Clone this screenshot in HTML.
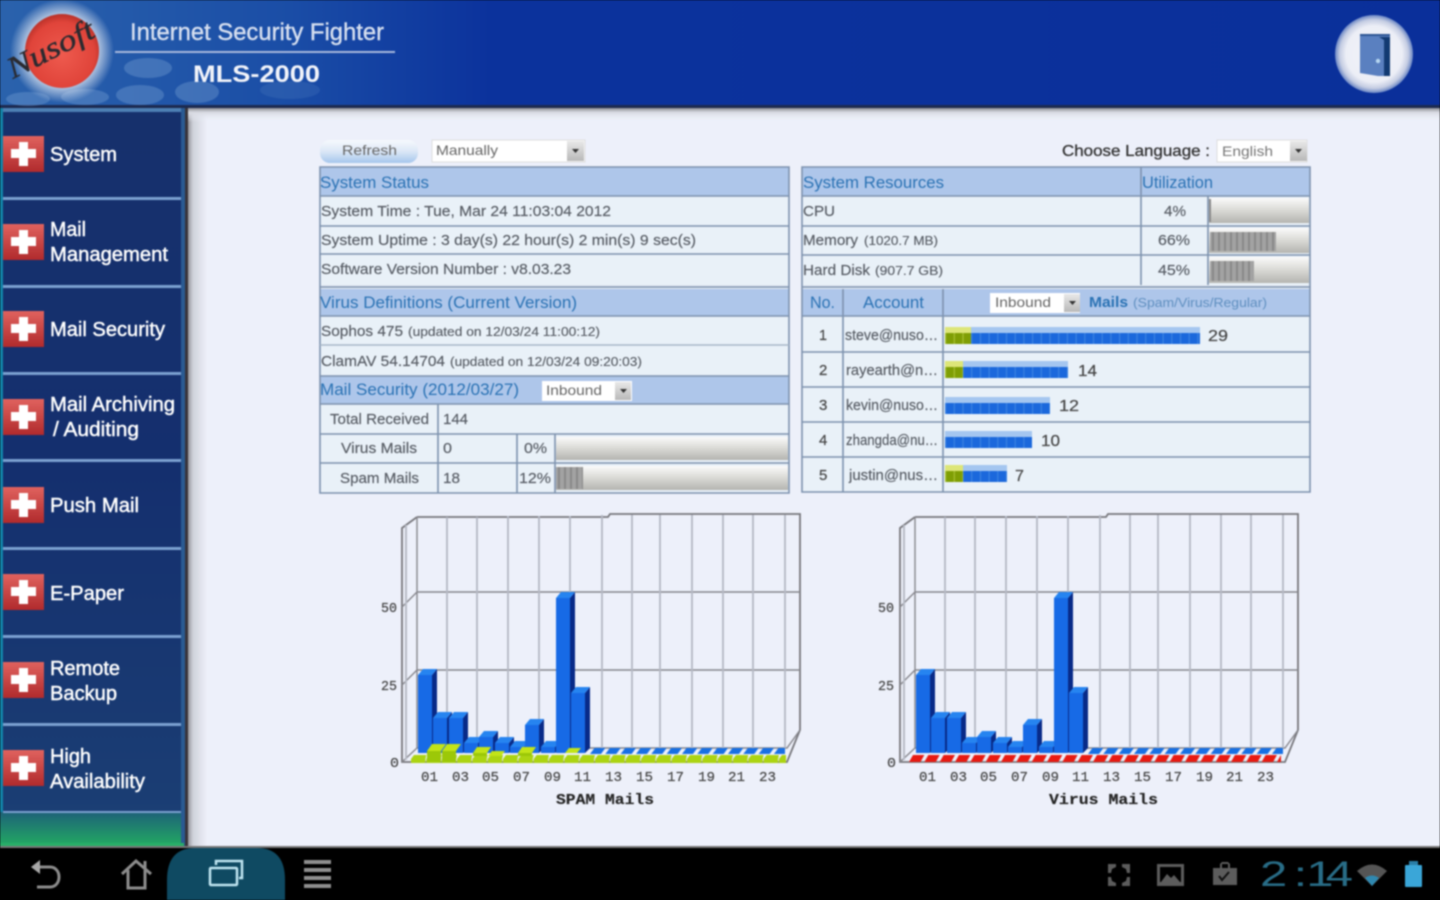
<!DOCTYPE html>
<html lang="en">
<head>
<meta charset="utf-8">
<title>MLS-2000</title>
<style>
html,body{margin:0;padding:0;width:1440px;height:900px;overflow:hidden;background:#000}
svg{display:block;filter:blur(.8px)}
text{font-family:"Liberation Sans",sans-serif}
.m{fill:#fff;font-size:20px;stroke:#fff;stroke-width:.45;paint-order:stroke}
.h{fill:#2a72b4;font-size:17px}
.t{fill:#555a62;font-size:15px;stroke:#555a62;stroke-width:.15}
.s{fill:#555a62;font-size:12.5px;stroke:#555a62;stroke-width:.12}
.c{font-family:"Liberation Mono",monospace;fill:#444;font-size:14px;stroke:#444;stroke-width:.2}
.n{fill:#444;font-size:16px;stroke:#444;stroke-width:.2}
</style>
</head>
<body>
<svg width="1440" height="900" viewBox="0 0 1440 900" xmlns="http://www.w3.org/2000/svg">
<defs>
<linearGradient id="hdr" x1="0" x2="1" y1="0" y2="0"><stop offset="0" stop-color="#2a62ac"/><stop offset=".2" stop-color="#1a4da6"/><stop offset=".34" stop-color="#0b329c"/><stop offset="1" stop-color="#0a2f9a"/></linearGradient>
<linearGradient id="side" x1="0" x2="0" y1="0" y2="1"><stop offset="0" stop-color="#16306c"/><stop offset=".5" stop-color="#142f6e"/><stop offset="1" stop-color="#1b3f74"/></linearGradient>
<linearGradient id="bot" x1="0" x2="0" y1="0" y2="1"><stop offset="0" stop-color="#1d6178"/><stop offset="1" stop-color="#22a862"/></linearGradient>
<linearGradient id="sh" x1="0" x2="1" y1="0" y2="0"><stop offset="0" stop-color="#8a8a90"/><stop offset=".3" stop-color="#cfd2da"/><stop offset="1" stop-color="#edf0fa"/></linearGradient>
<linearGradient id="sh2" x1="0" x2="0" y1="0" y2="1"><stop offset="0" stop-color="#6b6b70"/><stop offset=".4" stop-color="#d8dae2"/><stop offset="1" stop-color="#edf0fa" stop-opacity="0"/></linearGradient>
<linearGradient id="btn" x1="0" x2="0" y1="0" y2="1"><stop offset="0" stop-color="#f6f9fd"/><stop offset=".5" stop-color="#dbe7f6"/><stop offset="1" stop-color="#a5c6ec"/></linearGradient>
<linearGradient id="prog" x1="0" x2="0" y1="0" y2="1"><stop offset="0" stop-color="#fafafa"/><stop offset=".45" stop-color="#dcdcd8"/><stop offset="1" stop-color="#b4b4b0"/></linearGradient>
<linearGradient id="redb" x1="0" x2="0" y1="0" y2="1"><stop offset="0" stop-color="#e0625e"/><stop offset="1" stop-color="#b02a2c"/></linearGradient>
<linearGradient id="arr" x1="0" x2="0" y1="0" y2="1"><stop offset="0" stop-color="#e8e8e8"/><stop offset="1" stop-color="#b8b8b8"/></linearGradient>
<radialGradient id="logo" cx=".5" cy=".55" r=".55"><stop offset="0" stop-color="#ee5a4e"/><stop offset=".8" stop-color="#e0443a"/><stop offset="1" stop-color="#b83028"/></radialGradient>
<radialGradient id="glow"><stop offset=".55" stop-color="#fff" stop-opacity=".95"/><stop offset="1" stop-color="#fff" stop-opacity="0"/></radialGradient>
<radialGradient id="door" cx=".5" cy=".5" r=".5"><stop offset="0" stop-color="#f2f3f8"/><stop offset=".72" stop-color="#eceef6"/><stop offset=".88" stop-color="#c4cce2"/><stop offset="1" stop-color="#6a86c4"/></radialGradient>
<pattern id="stripe" width="6" height="10" patternUnits="userSpaceOnUse"><rect width="6" height="10" fill="#a2a2a2"/><rect width="2" height="10" fill="#8a8a8a"/></pattern>
<pattern id="bl" width="8.7" height="40" patternUnits="userSpaceOnUse" x="945"><rect width="8.7" height="40" fill="#1b68dc"/><rect width="1.2" height="40" fill="#3a82e2"/></pattern>
<pattern id="gr" width="8.7" height="40" patternUnits="userSpaceOnUse" x="945"><rect width="8.7" height="40" fill="#7f9e04"/><rect width="1.2" height="40" fill="#a6c030"/></pattern>
<pattern id="tileB" width="15.33" height="7" patternUnits="userSpaceOnUse" x="590" y="748"><path d="M0 6L4.500 0H15.330L11 6Z" fill="#1870e4"/></pattern>
<pattern id="tileG" width="15.33" height="8" patternUnits="userSpaceOnUse" x="411" y="755"><path d="M0 4L3 0H15.330L14.500 4V8H0Z" fill="#acd412"/></pattern>
<pattern id="tileR" width="15.33" height="7" patternUnits="userSpaceOnUse" x="909" y="755"><path d="M0 7L4 0H15.330L11.500 7Z" fill="#e81a12"/></pattern>
<g id="frame" fill="none">
<path d="M417 517H608L610 514H800V730L787 762H402V528L417 517" stroke="#77777c" stroke-width="1.8"/>
<path d="M417 517V748L402 762M800 730L787 748H417M417 592H800M417 670H800M402 607L417 592M402 685L417 670" stroke="#86868c" stroke-width="1.4"/>
<path d="M406 525V760" stroke="#b8bcc6" stroke-width="2"/>
<path d="M447 517V748M477 517V748M508 516V748M539 516V748M570 516V748M602 515V748M632 515V748M660 515V748M692 515V748M723 515V748M753 515V748M785 515V748" stroke="#b4b8c4" stroke-width="1.8"/>
</g>
<g id="bars">
<path fill="#082a88" d="M432 675l5-6V748l-5 5zM447 718l5-6V748l-5 5zM463 718l5-6V748l-5 5zM478 743l5-6V748l-5 5zM493 737l5-6V748l-5 5zM509 743l5-6V748l-5 5zM524 747l5-6V748l-5 5zM539 725l5-6V748l-5 5zM555 747l5-6V748l-5 5zM570 598l5-6V748l-5 5zM585 693l5-6V748l-5 5z"/>
<path fill="#2684f0" d="M418 675l5-6h14l-5 6zM433 718l5-6h14l-5 6zM449 718l5-6h14l-5 6zM464 743l5-6h14l-5 6zM479 737l5-6h14l-5 6zM495 743l5-6h14l-5 6zM510 747l5-6h14l-5 6zM525 725l5-6h14l-5 6zM541 747l5-6h14l-5 6zM556 598l5-6h14l-5 6zM571 693l5-6h14l-5 6z"/>
<path fill="#176ae6" d="M418 675h14V753H418zM433 718h14V753H433zM449 718h14V753H449zM464 743h14V753H464zM479 737h14V753H479zM495 743h14V753H495zM510 747h14V753H510zM525 725h14V753H525zM541 747h14V753H541zM556 598h14V753H556zM571 693h14V753H571z"/>
<rect x="590" y="748" width="195" height="6" fill="url(#tileB)"/>
</g>
</defs>

<!-- page -->
<rect width="1440" height="848" fill="#edf0fa"/>
<rect x="187" y="108" width="20" height="738" fill="url(#sh)"/>
<rect x="187" y="106" width="1253" height="16" fill="url(#sh2)"/>

<!-- header -->
<rect width="1440" height="105" fill="url(#hdr)"/>
<rect y="105" width="1440" height="3" fill="#1c2a50"/>
<g fill="#6f9ad0" opacity=".42">
<ellipse cx="148" cy="68" rx="24" ry="10"/><ellipse cx="140" cy="95" rx="24" ry="10"/><ellipse cx="197" cy="92" rx="22" ry="11"/><ellipse cx="28" cy="99" rx="22" ry="7"/><ellipse cx="85" cy="97" rx="24" ry="8"/><ellipse cx="290" cy="90" rx="30" ry="9" opacity=".4"/>
</g>
<circle cx="62" cy="51" r="52" fill="url(#glow)"/>
<circle cx="62" cy="51" r="37" fill="url(#logo)"/>
<text x="0" y="0" transform="translate(13 79) rotate(-27)" style="font-family:'Liberation Serif',serif;font-style:italic;font-size:30px;fill:#2a2a30;stroke:#2a2a30;stroke-width:.4" textLength="94" lengthAdjust="spacingAndGlyphs">Nusoft</text>
<text x="130" y="40" textLength="254" lengthAdjust="spacingAndGlyphs" style="font-size:24px;fill:#d6dff0;stroke:#d6dff0;stroke-width:.4">Internet Security Fighter</text>
<rect x="115" y="51" width="280" height="2" fill="#a8b8dc"/>
<text x="193" y="82" textLength="127" lengthAdjust="spacingAndGlyphs" style="font-size:24px;font-weight:bold;fill:#f2f4fa">MLS-2000</text>
<circle cx="1374" cy="54" r="39" fill="url(#door)"/>
<path d="M1360 35H1390V76H1378L1360 73Z" fill="#5a80c0"/>
<path d="M1379 37H1390V76H1384V40Z" fill="#123a72"/>
<path d="M1360 35H1390" stroke="#2d5594" stroke-width="2"/>
<circle cx="1378" cy="61" r="2.2" fill="#b6d6f0"/>

<!-- sidebar -->
<rect y="108" width="181" height="738" fill="url(#side)"/>
<rect x="0" y="108" width="3" height="738" fill="#1283a8"/>
<rect x="181" y="108" width="4" height="738" fill="#2a5a92"/>
<rect x="185" y="108" width="3" height="738" fill="#38343a"/>
<rect x="3" y="108" width="178" height="4" fill="#4d7fb4"/>
<rect y="812" width="181" height="33" fill="url(#bot)"/>
<rect y="843" width="184" height="3" fill="#28ae68"/>
<g fill="#7ba0d0">
<rect x="3" y="197" width="178" height="3"/><rect x="3" y="285" width="178" height="3"/><rect x="3" y="372" width="178" height="3"/><rect x="3" y="459" width="178" height="3"/><rect x="3" y="547" width="178" height="3"/><rect x="3" y="635" width="178" height="3"/><rect x="3" y="723" width="178" height="3"/><rect x="3" y="811" width="178" height="2"/>
</g>
<g id="redicons">
<rect x="3" y="136" width="41" height="36" fill="url(#redb)"/><path d="M19 142h9v7h8v9h-8v8h-9v-8h-8v-9h8z" fill="#fff"/>
<rect x="3" y="224" width="41" height="36" fill="url(#redb)"/><path d="M19 230h9v7h8v9h-8v8h-9v-8h-8v-9h8z" fill="#fff"/>
<rect x="3" y="311" width="41" height="36" fill="url(#redb)"/><path d="M19 317h9v7h8v9h-8v8h-9v-8h-8v-9h8z" fill="#fff"/>
<rect x="3" y="399" width="41" height="36" fill="url(#redb)"/><path d="M19 405h9v7h8v9h-8v8h-9v-8h-8v-9h8z" fill="#fff"/>
<rect x="3" y="487" width="41" height="36" fill="url(#redb)"/><path d="M19 493h9v7h8v9h-8v8h-9v-8h-8v-9h8z" fill="#fff"/>
<rect x="3" y="574" width="41" height="36" fill="url(#redb)"/><path d="M19 580h9v7h8v9h-8v8h-9v-8h-8v-9h8z" fill="#fff"/>
<rect x="3" y="662" width="41" height="36" fill="url(#redb)"/><path d="M19 668h9v7h8v9h-8v8h-9v-8h-8v-9h8z" fill="#fff"/>
<rect x="3" y="750" width="41" height="36" fill="url(#redb)"/><path d="M19 756h9v7h8v9h-8v8h-9v-8h-8v-9h8z" fill="#fff"/>
</g>
<text class="m" x="50" y="161" textLength="67" lengthAdjust="spacingAndGlyphs">System</text>
<text class="m" x="50" y="236" textLength="36" lengthAdjust="spacingAndGlyphs">Mail</text>
<text class="m" x="50" y="261" textLength="118" lengthAdjust="spacingAndGlyphs">Management</text>
<text class="m" x="50" y="336" textLength="115" lengthAdjust="spacingAndGlyphs">Mail Security</text>
<text class="m" x="50" y="411" textLength="125" lengthAdjust="spacingAndGlyphs">Mail Archiving</text>
<text class="m" x="53" y="436" textLength="86" lengthAdjust="spacingAndGlyphs">/ Auditing</text>
<text class="m" x="50" y="512" textLength="89" lengthAdjust="spacingAndGlyphs">Push Mail</text>
<text class="m" x="50" y="600" textLength="74" lengthAdjust="spacingAndGlyphs">E-Paper</text>
<text class="m" x="50" y="675" textLength="70" lengthAdjust="spacingAndGlyphs">Remote</text>
<text class="m" x="50" y="700" textLength="67" lengthAdjust="spacingAndGlyphs">Backup</text>
<text class="m" x="50" y="763" textLength="41" lengthAdjust="spacingAndGlyphs">High</text>
<text class="m" x="50" y="788" textLength="95" lengthAdjust="spacingAndGlyphs">Availability</text>

<!-- top controls -->
<rect x="320" y="140" width="98" height="23" rx="10" fill="url(#btn)"/>
<text x="342" y="155" textLength="55" lengthAdjust="spacingAndGlyphs" style="font-size:14px;fill:#666">Refresh</text>
<rect x="432" y="140" width="153" height="22" fill="#fff" stroke="#ddd"/>
<rect x="567" y="141" width="17" height="20" fill="url(#arr)"/><path d="M572 149h7l-3.500 4z" fill="#333"/>
<text x="436" y="155" textLength="62" lengthAdjust="spacingAndGlyphs" style="font-size:14px;fill:#666">Manually</text>
<text x="1062" y="156" textLength="148" lengthAdjust="spacingAndGlyphs" style="font-size:16px;fill:#333;stroke:#333;stroke-width:.3">Choose Language :</text>
<rect x="1217" y="140" width="90" height="22" fill="#fff" stroke="#ddd"/>
<rect x="1290" y="141" width="17" height="20" fill="url(#arr)"/><path d="M1295 149h7l-3.500 4z" fill="#333"/>
<text x="1222" y="156" textLength="51" lengthAdjust="spacingAndGlyphs" style="font-size:14px;fill:#777">English</text>

<!-- left table -->
<rect x="320" y="167" width="469" height="326" fill="#e9f1f8"/>
<g fill="#aec6ea"><rect x="320" y="167" width="469" height="29"/><rect x="320" y="289" width="469" height="27"/><rect x="320" y="376" width="469" height="28"/></g>
<rect x="320" y="285" width="469" height="4" fill="#e4eaf4"/>
<g stroke="#7d92ae" stroke-width="1.6" fill="none">
<path d="M320 167H789V493H320Z"/>
<path d="M320 196H789M320 226H789M320 254H789M320 287H789M320 316H789M320 376H789M320 404H789M320 434H789M320 463H789"/>
<path d="M438 404V493M517 434V493M555 434V493"/>
</g>
<path d="M320 345H789" stroke="#a8b8c8" stroke-width="1.5"/>
<rect x="556" y="437" width="232" height="23" fill="url(#prog)"/>
<rect x="556" y="466" width="232" height="24" fill="url(#prog)"/>
<rect x="556" y="467" width="27" height="22" fill="url(#stripe)"/>

<text class="h" x="320" y="188" textLength="109" lengthAdjust="spacingAndGlyphs">System Status</text>
<text class="t" x="321" y="216" textLength="290" lengthAdjust="spacingAndGlyphs">System Time : Tue, Mar 24 11:03:04 2012</text>
<text class="t" x="321" y="245" textLength="375" lengthAdjust="spacingAndGlyphs">System Uptime : 3 day(s) 22 hour(s) 2 min(s) 9 sec(s)</text>
<text class="t" x="321" y="274" textLength="250" lengthAdjust="spacingAndGlyphs">Software Version Number : v8.03.23</text>
<text class="h" x="320" y="308" textLength="257" lengthAdjust="spacingAndGlyphs">Virus Definitions (Current Version)</text>
<text class="t" x="321" y="336" textLength="82" lengthAdjust="spacingAndGlyphs">Sophos 475</text>
<text class="s" x="408" y="336" textLength="192" lengthAdjust="spacingAndGlyphs">(updated on 12/03/24 11:00:12)</text>
<text class="t" x="321" y="366" textLength="124" lengthAdjust="spacingAndGlyphs">ClamAV 54.14704</text>
<text class="s" x="450" y="366" textLength="192" lengthAdjust="spacingAndGlyphs">(updated on 12/03/24 09:20:03)</text>
<text class="h" x="320" y="395" textLength="199" lengthAdjust="spacingAndGlyphs">Mail Security (2012/03/27)</text>
<rect x="542" y="381" width="90" height="20" fill="#fff"/>
<rect x="615" y="382" width="16" height="18" fill="url(#arr)"/><path d="M620 389h7l-3.500 4z" fill="#333"/>
<text x="546" y="395" textLength="56" lengthAdjust="spacingAndGlyphs" style="font-size:14px;fill:#666">Inbound</text>
<text class="t" x="330" y="424" textLength="99" lengthAdjust="spacingAndGlyphs">Total Received</text>
<text class="t" x="443" y="424" textLength="25" lengthAdjust="spacingAndGlyphs">144</text>
<text class="t" x="341" y="453" textLength="76" lengthAdjust="spacingAndGlyphs">Virus Mails</text>
<text class="t" x="443" y="453" textLength="9" lengthAdjust="spacingAndGlyphs">0</text>
<text class="t" x="524" y="453" textLength="23" lengthAdjust="spacingAndGlyphs">0%</text>
<text class="t" x="340" y="483" textLength="79" lengthAdjust="spacingAndGlyphs">Spam Mails</text>
<text class="t" x="443" y="483" textLength="17" lengthAdjust="spacingAndGlyphs">18</text>
<text class="t" x="519" y="483" textLength="32" lengthAdjust="spacingAndGlyphs">12%</text>

<!-- right table -->
<rect x="802" y="167" width="508" height="325" fill="#e9f1f8"/>
<g fill="#aec6ea"><rect x="802" y="167" width="508" height="29"/><rect x="802" y="289" width="508" height="27"/></g>
<rect x="802" y="285" width="508" height="4" fill="#e4eaf4"/>
<g stroke="#7d92ae" stroke-width="1.6" fill="none">
<path d="M802 167H1310V492H802Z"/>
<path d="M802 196H1310M802 226H1310M802 255H1310M802 287H1310M802 316H1310M802 352H1310M802 387H1310M802 422H1310M802 457H1310"/>
<path d="M1141 167V285M1208 196V285M843 289V492M943 289V492"/>
</g>
<rect x="1209" y="198" width="100" height="25" fill="url(#prog)"/>
<rect x="1209" y="228" width="100" height="25" fill="url(#prog)"/>
<rect x="1209" y="257" width="100" height="26" fill="url(#prog)"/>
<rect x="1209" y="199" width="2" height="23" fill="#8a8a8a"/>
<rect x="1210" y="232" width="66" height="19" fill="url(#stripe)"/>
<rect x="1210" y="261" width="44" height="20" fill="url(#stripe)"/>

<text class="h" x="803" y="188" textLength="141" lengthAdjust="spacingAndGlyphs">System Resources</text>
<text class="h" x="1142" y="188" textLength="71" lengthAdjust="spacingAndGlyphs">Utilization</text>
<text class="t" x="803" y="216" textLength="32" lengthAdjust="spacingAndGlyphs">CPU</text>
<text class="t" x="1164" y="216" textLength="22" lengthAdjust="spacingAndGlyphs">4%</text>
<text class="t" x="803" y="245" textLength="55" lengthAdjust="spacingAndGlyphs">Memory</text>
<text class="s" x="864" y="245" textLength="74" lengthAdjust="spacingAndGlyphs">(1020.7 MB)</text>
<text class="t" x="1158" y="245" textLength="32" lengthAdjust="spacingAndGlyphs">66%</text>
<text class="t" x="803" y="275" textLength="67" lengthAdjust="spacingAndGlyphs">Hard Disk</text>
<text class="s" x="875" y="275" textLength="68" lengthAdjust="spacingAndGlyphs">(907.7 GB)</text>
<text class="t" x="1158" y="275" textLength="32" lengthAdjust="spacingAndGlyphs">45%</text>
<text class="h" x="810" y="308" textLength="25" lengthAdjust="spacingAndGlyphs">No.</text>
<text class="h" x="863" y="308" textLength="61" lengthAdjust="spacingAndGlyphs">Account</text>
<rect x="990" y="293" width="90" height="20" fill="#fff"/>
<rect x="1064" y="294" width="16" height="18" fill="url(#arr)"/><path d="M1069 301h7l-3.500 4z" fill="#333"/>
<text x="995" y="307" textLength="56" lengthAdjust="spacingAndGlyphs" style="font-size:14px;fill:#666">Inbound</text>
<text class="h" x="1089" y="307" textLength="39" lengthAdjust="spacingAndGlyphs" style="font-size:15px;font-weight:bold">Mails</text>
<text x="1133" y="307" textLength="134" lengthAdjust="spacingAndGlyphs" style="font-size:12.5px;fill:#5f8fc0">(Spam/Virus/Regular)</text>

<text class="n" x="819" y="340" textLength="8" lengthAdjust="spacingAndGlyphs" style="font-size:15px">1</text>
<text class="n" x="819" y="375" style="font-size:15px">2</text>
<text class="n" x="819" y="410" style="font-size:15px">3</text>
<text class="n" x="819" y="445" style="font-size:15px">4</text>
<text class="n" x="819" y="480" style="font-size:15px">5</text>
<text class="t" x="845" y="340" textLength="93" lengthAdjust="spacingAndGlyphs">steve@nuso…</text>
<text class="t" x="846" y="375" textLength="92" lengthAdjust="spacingAndGlyphs">rayearth@n…</text>
<text class="t" x="846" y="410" textLength="92" lengthAdjust="spacingAndGlyphs">kevin@nuso…</text>
<text class="t" x="846" y="445" textLength="92" lengthAdjust="spacingAndGlyphs">zhangda@nu…</text>
<text class="t" x="849" y="480" textLength="89" lengthAdjust="spacingAndGlyphs">justin@nus…</text>

<!-- mail bars -->
<g>
<rect x="945" y="327" width="255" height="6" fill="#a4c6f0"/><rect x="945" y="333" width="255" height="11" fill="url(#bl)"/>
<rect x="945" y="327" width="26" height="6" fill="#dde678"/><rect x="945" y="333" width="26" height="11" fill="url(#gr)"/>
<rect x="945" y="361" width="123" height="6" fill="#a4c6f0"/><rect x="945" y="367" width="123" height="11" fill="url(#bl)"/>
<rect x="945" y="361" width="18" height="6" fill="#dde678"/><rect x="945" y="367" width="18" height="11" fill="url(#gr)"/>
<rect x="945" y="397" width="105" height="6" fill="#a4c6f0"/><rect x="945" y="403" width="105" height="11" fill="url(#bl)"/>
<rect x="945" y="431" width="87" height="6" fill="#a4c6f0"/><rect x="945" y="437" width="87" height="11" fill="url(#bl)"/>
<rect x="945" y="465" width="62" height="6" fill="#a4c6f0"/><rect x="945" y="471" width="62" height="11" fill="url(#bl)"/>
<rect x="945" y="465" width="18" height="6" fill="#dde678"/><rect x="945" y="471" width="18" height="11" fill="url(#gr)"/>
</g>
<text class="n" x="1208" y="341" textLength="20" lengthAdjust="spacingAndGlyphs">29</text>
<text class="n" x="1078" y="376" textLength="19" lengthAdjust="spacingAndGlyphs">14</text>
<text class="n" x="1059" y="411" textLength="20" lengthAdjust="spacingAndGlyphs">12</text>
<text class="n" x="1041" y="446" textLength="19" lengthAdjust="spacingAndGlyphs">10</text>
<text class="n" x="1015" y="481">7</text>

<!-- chart 1 -->
<use href="#frame"/>
<use href="#bars"/>
<rect x="411" y="755" width="375" height="8" fill="url(#tileG)"/>
<g>
<path d="M427 751l5-7h14l-5 7zM442 751l5-7h14l-5 7z" fill="#c2e418"/>
<path d="M427 751h14V762H427zM442 751h14V762H442z" fill="#9cc808"/>
<path d="M473 753l4-6h14l-4 6zM518 753l4-6h14l-4 6z" fill="#c2e418"/>
<path d="M473 753h14V756H473zM518 753h14V756H518z" fill="#9cc808"/>
<path d="M488 756l4-5h13l-4 5zM565 753l4-5h12l-4 5z" fill="#c2e418"/>
</g>
<text class="c" x="381" y="612" textLength="16" lengthAdjust="spacingAndGlyphs">50</text>
<text class="c" x="381" y="690" textLength="16" lengthAdjust="spacingAndGlyphs">25</text>
<text class="c" x="390" y="767" textLength="9" lengthAdjust="spacingAndGlyphs">0</text>
<text class="c" x="421" y="781" textLength="17" lengthAdjust="spacingAndGlyphs">01</text><text class="c" x="452" y="781" textLength="17" lengthAdjust="spacingAndGlyphs">03</text><text class="c" x="482" y="781" textLength="17" lengthAdjust="spacingAndGlyphs">05</text><text class="c" x="513" y="781" textLength="17" lengthAdjust="spacingAndGlyphs">07</text><text class="c" x="544" y="781" textLength="17" lengthAdjust="spacingAndGlyphs">09</text><text class="c" x="574" y="781" textLength="17" lengthAdjust="spacingAndGlyphs">11</text><text class="c" x="605" y="781" textLength="17" lengthAdjust="spacingAndGlyphs">13</text><text class="c" x="636" y="781" textLength="17" lengthAdjust="spacingAndGlyphs">15</text><text class="c" x="667" y="781" textLength="17" lengthAdjust="spacingAndGlyphs">17</text><text class="c" x="698" y="781" textLength="17" lengthAdjust="spacingAndGlyphs">19</text><text class="c" x="728" y="781" textLength="17" lengthAdjust="spacingAndGlyphs">21</text><text class="c" x="759" y="781" textLength="17" lengthAdjust="spacingAndGlyphs">23</text>
<text class="c" x="556" y="804" textLength="98" lengthAdjust="spacingAndGlyphs" style="font-size:15px;font-weight:bold;fill:#222">SPAM Mails</text>

<!-- chart 2 -->
<use href="#frame" x="498"/>
<use href="#bars" x="498"/>
<rect x="909" y="755" width="372" height="7" fill="url(#tileR)"/>
<text class="c" x="878" y="612" textLength="16" lengthAdjust="spacingAndGlyphs">50</text>
<text class="c" x="878" y="690" textLength="16" lengthAdjust="spacingAndGlyphs">25</text>
<text class="c" x="887" y="767" textLength="9" lengthAdjust="spacingAndGlyphs">0</text>
<text class="c" x="919" y="781" textLength="17" lengthAdjust="spacingAndGlyphs">01</text><text class="c" x="950" y="781" textLength="17" lengthAdjust="spacingAndGlyphs">03</text><text class="c" x="980" y="781" textLength="17" lengthAdjust="spacingAndGlyphs">05</text><text class="c" x="1011" y="781" textLength="17" lengthAdjust="spacingAndGlyphs">07</text><text class="c" x="1042" y="781" textLength="17" lengthAdjust="spacingAndGlyphs">09</text><text class="c" x="1072" y="781" textLength="17" lengthAdjust="spacingAndGlyphs">11</text><text class="c" x="1103" y="781" textLength="17" lengthAdjust="spacingAndGlyphs">13</text><text class="c" x="1134" y="781" textLength="17" lengthAdjust="spacingAndGlyphs">15</text><text class="c" x="1165" y="781" textLength="17" lengthAdjust="spacingAndGlyphs">17</text><text class="c" x="1196" y="781" textLength="17" lengthAdjust="spacingAndGlyphs">19</text><text class="c" x="1226" y="781" textLength="17" lengthAdjust="spacingAndGlyphs">21</text><text class="c" x="1257" y="781" textLength="17" lengthAdjust="spacingAndGlyphs">23</text>
<text class="c" x="1049" y="804" textLength="109" lengthAdjust="spacingAndGlyphs" style="font-size:15px;font-weight:bold;fill:#222">Virus Mails</text>

<!-- nav bar -->
<rect y="846" width="1440" height="2" fill="#777"/>
<rect y="848" width="1440" height="52" fill="#000"/>
<path d="M167 880Q167 848 195 848H257Q285 848 285 880V900H167Z" fill="#0f4a62"/>
<g fill="none" stroke="#8c8c8c" stroke-width="3">
<path d="M39 867H50C62 867 62 887 50 887H37"/>
<path d="M122 874L136 861L151 874M128 870V888H145V870M145 868V861"/>
</g>
<path d="M31 867L40 860V874Z" fill="#a8a8a8"/>
<g fill="none" stroke="#bfe4f0" stroke-width="2.5">
<rect x="210" y="868" width="27" height="17" rx="1"/>
<path d="M216 865V861H242V878H239"/>
</g>
<path d="M304 862H331M304 870H331M304 878H331M304 886H331" stroke="#8f8f8f" stroke-width="4"/>
<g fill="#5c5c5c">
<path d="M1108 864h8v3l-4 2-1 4h-3zM1130 864h-8v3l4 2 1 4h3zM1108 886h8v-3l-4-2-1-4h-3zM1130 886h-8v-3l4-2 1-4h3z"/>
<path fill-rule="evenodd" d="M1157 864h27v22h-27zM1160 867v15h21v-15z"/>
<path d="M1161 882l6-8 4 4 3-3 6 7z"/>
<path fill-rule="evenodd" d="M1213 868h7v-4l2-2h6l2 2v4h7v17h-24zM1222 864v4h6v-4z"/>
</g>
<path d="M1219 876l3 4 7-8" stroke="#111" stroke-width="2" fill="none"/>
<text transform="translate(1260 886) scale(1.4 1)" x="0 24 33 47" y="0" style="font-size:35px;fill:#2f7f9e;fill-opacity:.85">2:14</text>
<path d="M1357 871Q1372 858 1387 871L1372 886Z" fill="#555"/>
<path d="M1365 878Q1372 873 1379 878L1372 886Z" fill="#2f88b0"/>
<rect x="1409" y="861" width="9" height="4" fill="#2a7fa8"/>
<rect x="1405" y="865" width="17" height="22" rx="1" fill="#3aa6d8"/>
</svg>
</body>
</html>
